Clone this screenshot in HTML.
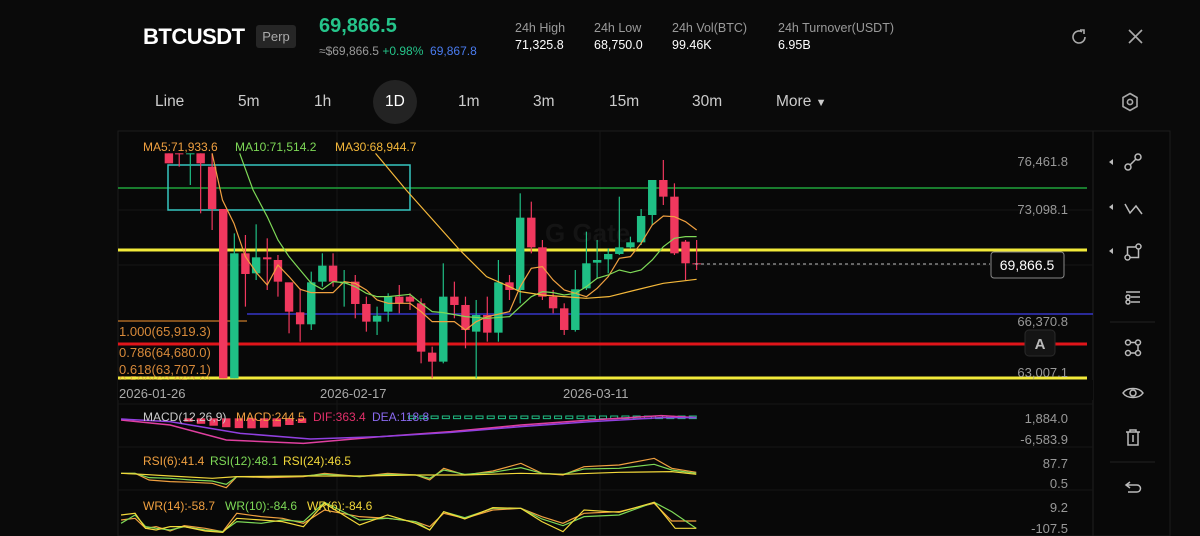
<!DOCTYPE html>
<html><head><meta charset="utf-8"><style>
*{margin:0;padding:0;box-sizing:border-box}
body{width:1200px;height:536px;background:#0a0a0a;overflow:hidden;font-family:"Liberation Sans",sans-serif;position:relative;color:#fff}
.a{position:absolute;white-space:nowrap}
.g{color:#9a9a9a}
</style></head><body>
<div class="a" style="left:143px;top:24px;font-size:22px;font-weight:bold;letter-spacing:-0.5px">BTCUSDT</div>
<div class="a" style="left:256px;top:25px;width:40px;height:23px;background:#262626;border-radius:3px;font-size:13px;color:#aaa;text-align:center;line-height:23px">Perp</div>
<div class="a" style="left:319px;top:15px;font-size:20px;font-weight:bold;color:#25c48a">69,866.5</div>
<div class="a" style="left:319px;top:44px;font-size:12px"><span class="g">≈$69,866.5</span> <span style="color:#25c48a">+0.98%</span> <span style="color:#4a7cf0">&nbsp;69,867.8</span></div>
<div class="a g" style="left:515px;top:21px;font-size:12.5px">24h High</div>
<div class="a" style="left:515px;top:38px;font-size:12.5px">71,325.8</div>
<div class="a g" style="left:594px;top:21px;font-size:12.5px">24h Low</div>
<div class="a" style="left:594px;top:38px;font-size:12.5px">68,750.0</div>
<div class="a g" style="left:672px;top:21px;font-size:12.5px">24h Vol(BTC)</div>
<div class="a" style="left:672px;top:38px;font-size:12.5px">99.46K</div>
<div class="a g" style="left:778px;top:21px;font-size:12.5px">24h Turnover(USDT)</div>
<div class="a" style="left:778px;top:38px;font-size:12.5px">6.95B</div>
<svg class="a" style="left:1070px;top:27px" width="20" height="20" viewBox="0 0 20 20" fill="none" stroke="#aaa" stroke-width="1.6"><path d="M15 10a6 6 0 1 1-3-5.2"/><path d="M10 3h4v4"/></svg>
<svg class="a" style="left:1127px;top:28px" width="17" height="17" viewBox="0 0 17 17" stroke="#aaa" stroke-width="1.6"><path d="M2 2l13 13M15 2L2 15"/></svg>

<div class="a" style="left:373px;top:80px;width:44px;height:44px;border-radius:22px;background:#232323"></div>
<div class="a" style="top:93px;font-size:15.5px;color:#ccc;left:0;width:100%;height:20px">
<span class="a" style="left:155px">Line</span><span class="a" style="left:238px">5m</span><span class="a" style="left:314px">1h</span><span class="a" style="left:385px;color:#fff">1D</span><span class="a" style="left:458px">1m</span><span class="a" style="left:533px">3m</span><span class="a" style="left:609px">15m</span><span class="a" style="left:692px">30m</span><span class="a" style="left:776px">More <span style="font-size:11px">▼</span></span></div>
<svg class="a" style="left:1121px;top:92px" width="18" height="20" viewBox="0 0 18 20" fill="none" stroke="#aaa" stroke-width="1.6"><path d="M9 1.5l7 4v9l-7 4-7-4v-9z"/><circle cx="9" cy="10" r="2.6"/></svg>

<svg class="a" style="left:0;top:0" width="1200" height="536" id="c">
<rect x="118" y="131" width="1052" height="405" fill="#080808" stroke="#1c1c1c"/>
<line x1="1093" y1="131" x2="1093" y2="536" stroke="#1f1f1f"/>
<g stroke="#161616"><line x1="118" y1="210" x2="1093" y2="210"/><line x1="118" y1="265" x2="1093" y2="265"/><line x1="118" y1="404" x2="1093" y2="404"/><line x1="118" y1="447" x2="1093" y2="447"/><line x1="118" y1="490" x2="1093" y2="490"/><line x1="337" y1="131" x2="337" y2="536"/><line x1="600" y1="131" x2="600" y2="536"/></g>
<text x="545" y="242" font-size="26" font-weight="bold" fill="#141414" font-family="Liberation Sans">G Gate</text>
<line x1="118" y1="188" x2="1087" y2="188" stroke="#1fa23a" stroke-width="1.5"/>
<line x1="118" y1="250" x2="1087" y2="250" stroke="#f2ea3a" stroke-width="3"/>
<line x1="247" y1="314" x2="1093" y2="314" stroke="#3636c8" stroke-width="1.5"/>
<line x1="118" y1="321" x2="247" y2="321" stroke="#c77a2a" stroke-width="1.2"/>
<line x1="118" y1="344" x2="1087" y2="344" stroke="#e0151a" stroke-width="3"/>
<line x1="118" y1="378" x2="1087" y2="378" stroke="#f2ea3a" stroke-width="3"/>
<rect x="168" y="165" width="242" height="45" fill="none" stroke="#35c6c0" stroke-width="1.5"/>
<g id="cd" transform="translate(100,130) scale(0.3827,0.3333)"></g>
<g fill="none" stroke-width="1.2" transform="translate(100,130) scale(0.3827,0.3333)">
<polyline vector-effect="non-scaling-stroke" stroke="#f0a040" points="293,70 320,210 350,280 380,380 410,430 437,465 465,405 494,440 523,478 552,488 609,488 638,455 667,460 696,480 724,510 753,520 810,520 839,545 868,575 897,575 926,575 955,600 983,575 1012,560 1070,545 1098,470 1127,415 1156,410 1184,450 1213,480 1242,490 1271,500 1299,475 1328,440 1357,385 1386,380 1414,340 1443,285 1472,258 1501,260 1530,275 1559,300"/>
<polyline vector-effect="non-scaling-stroke" stroke="#7ed957" points="365,70 400,180 437,260 465,330 494,380 523,420 552,460 581,478 609,455 638,458 667,470 696,490 724,500 753,500 810,493 839,520 868,545 897,548 955,560 1012,565 1070,560 1098,530 1127,500 1156,485 1184,488 1213,495 1242,490 1271,470 1299,445 1328,435 1357,420 1386,428 1414,420 1443,390 1472,350 1501,325 1530,320 1559,320"/>
<polyline vector-effect="non-scaling-stroke" stroke="#f5b83a" points="720,70 800,180 870,270 940,360 1010,440 1070,470 1098,485 1156,495 1213,500 1270,505 1330,500 1400,480 1472,460 1559,448"/>
</g>
<line x1="695" y1="264" x2="990" y2="264" stroke="#bbb" stroke-dasharray="3,3"/>
<g font-family="Liberation Sans" font-size="12">
<text x="143" y="151" fill="#f0a040">MA5:71,933.6</text><text x="235" y="151" fill="#7ed957">MA10:71,514.2</text><text x="335" y="151" fill="#f5b83a">MA30:68,944.7</text>
</g>
<g font-family="Liberation Sans" font-size="13" fill="#d88a3a">
<text x="119" y="336">1.000(65,919.3)</text><text x="119" y="357">0.786(64,680.0)</text><text x="119" y="374">0.618(63,707.1)</text><text x="119" y="385" opacity=".6">0.500(63,062.9)</text>
</g>
<rect x="118" y="380" width="975" height="20" fill="#080808"/>
<g font-family="Liberation Sans" font-size="13" fill="#aaa"><text x="119" y="398">2026-01-26</text><text x="320" y="398">2026-02-17</text><text x="563" y="398">2026-03-11</text></g>
<g font-family="Liberation Sans" font-size="13" fill="#999" text-anchor="end"><text x="1068" y="166">76,461.8</text><text x="1068" y="214">73,098.1</text><text x="1068" y="326">66,370.8</text><text x="1068" y="377">63,007.1</text>
<text x="1068" y="423">1,884.0</text><text x="1068" y="444">-6,583.9</text><text x="1068" y="468">87.7</text><text x="1068" y="488">0.5</text><text x="1068" y="512">9.2</text><text x="1068" y="533">-107.5</text></g>
<rect x="991" y="252" width="73" height="26" rx="3" fill="#0a0a0a" stroke="#888"/>
<text x="1027" y="270" font-family="Liberation Sans" font-size="14" fill="#fff" text-anchor="middle">69,866.5</text>
<rect x="1025" y="330" width="30" height="26" rx="4" fill="#141414" stroke="#2a2a2a"/>
<text x="1040" y="349" font-family="Liberation Sans" font-size="15" font-weight="bold" fill="#bbb" text-anchor="middle">A</text>
<g transform="translate(100,395) scale(0.7015,0.3333)" fill="none">
<g id="hist"></g>
<polyline vector-effect="non-scaling-stroke" stroke="#e040a0" stroke-width="1.5" points="30,75 100,90 180,135 290,145 400,125 500,110 600,90 700,75 800,62 850,68"/>
<polyline vector-effect="non-scaling-stroke" stroke="#9040e0" stroke-width="1.5" points="30,72 100,80 200,115 300,132 400,125 500,112 600,95 700,80 800,68 850,68"/>
<polyline vector-effect="non-scaling-stroke" stroke="#f0a040" stroke-width="1.2" points="30,235 50,235 70,255 100,260 130,262 160,265 180,278 195,245 240,248 290,245 320,235 370,245 410,235 450,240 470,255 490,220 520,240 560,228 600,205 630,235 660,240 690,215 740,210 790,190 815,220 850,232"/>
<polyline vector-effect="non-scaling-stroke" stroke="#7ed957" stroke-width="1.2" points="30,235 50,235 70,248 100,250 130,255 160,258 180,268 195,245 240,245 290,243 320,238 370,245 410,238 450,240 470,250 490,225 520,238 560,232 600,218 630,235 660,238 690,222 740,220 790,208 815,225 850,235"/>
<polyline vector-effect="non-scaling-stroke" stroke="#f2d83a" stroke-width="1.2" points="30,235 60,238 100,243 160,250 195,245 290,243 370,243 450,240 520,240 600,235 660,238 740,232 815,230 850,238"/>
<polyline vector-effect="non-scaling-stroke" stroke="#f0a040" stroke-width="1.2" points="30,375 50,370 65,400 80,395 100,408 120,392 150,400 175,410 195,355 230,365 260,370 290,385 320,345 370,365 410,370 450,380 470,395 490,355 520,370 560,345 600,340 630,365 660,385 690,355 740,350 790,325 815,378 850,378"/>
<polyline vector-effect="non-scaling-stroke" stroke="#7ed957" stroke-width="1.2" points="30,385 50,360 65,395 80,400 100,405 120,395 150,405 175,410 195,380 230,385 260,375 290,380 320,322 370,375 410,370 450,380 470,405 490,350 520,368 560,340 600,340 630,372 660,392 690,365 740,360 790,322 815,350 850,400"/>
<polyline vector-effect="non-scaling-stroke" stroke="#f2d83a" stroke-width="1.2" points="30,360 50,355 65,400 80,405 100,395 120,395 150,408 175,412 195,370 230,375 260,380 290,395 320,325 370,390 410,360 450,385 470,405 490,350 520,372 560,338 600,340 630,380 660,410 690,345 740,352 790,322 820,400 850,400"/>
</g>
<g font-family="Liberation Sans" font-size="12"><text x="143" y="421" fill="#ccc">MACD(12,26,9)</text><text x="236" y="421" fill="#f0a040">MACD:244.5</text><text x="313" y="421" fill="#e0306a">DIF:363.4</text><text x="372" y="421" fill="#8a6af0">DEA:118.8</text>
<text x="143" y="465" fill="#f0a040">RSI(6):41.4</text><text x="210" y="465" fill="#7ed957">RSI(12):48.1</text><text x="283" y="465" fill="#f2d83a">RSI(24):46.5</text>
<text x="143" y="510" fill="#f0a040">WR(14):-58.7</text><text x="225" y="510" fill="#7ed957">WR(10):-84.6</text><text x="307" y="510" fill="#f2d83a">WR(6):-84.6</text></g>
<g fill="none" stroke="#bbb" stroke-width="1.5">
<g transform="translate(1124,153)"><circle cx="4" cy="14" r="3"/><circle cx="14" cy="4" r="3"/><path d="M6 12l6-6"/></g>
<g transform="translate(1124,199)"><path d="M1 5l5 9 6-7 6 8"/></g>
<g transform="translate(1124,243)"><circle cx="3.5" cy="14.5" r="2.5"/><circle cx="14.5" cy="3.5" r="2.5"/><path d="M3.5 12V4h8M6 14.5h8.5V6"/></g>
<g transform="translate(1124,288)"><path d="M2 4h14M7 9h9M7 14h9"/><circle cx="4" cy="9" r="2"/><circle cx="4" cy="14" r="2"/></g>
<g transform="translate(1124,339)"><circle cx="4" cy="3.5" r="2.5"/><circle cx="14" cy="3.5" r="2.5"/><circle cx="4" cy="14" r="2.5"/><circle cx="14" cy="14" r="2.5"/><path d="M6.5 3.5h5M6.5 14h5M14 6v5"/></g>
<g transform="translate(1122,384)"><path d="M1 9c4-6 16-6 20 0-4 6-16 6-20 0z"/><circle cx="11" cy="9" r="3"/></g>
<g transform="translate(1125,429)"><path d="M1 3h14M5 3V1h6v2M3 3v13h10V3M8 6v7"/></g>
<g transform="translate(1125,480)"><path d="M5 2L1 5l4 3M1 5h11a3.5 3.5 0 0 1 0 7H3"/></g>
</g>
<g fill="#bbb"><path d="M1113 159l-4 3 4 3z"/><path d="M1113 204l-4 3 4 3z"/><path d="M1113 248l-4 3 4 3z"/></g>
<g stroke="#222"><line x1="1110" y1="322" x2="1155" y2="322"/><line x1="1110" y1="462" x2="1155" y2="462"/></g>
</svg>
<script>
var C=[[180,70,100,70,100,0],[207,70,72,70,110,0],[236,70,72,70,165,1],[263,70,100,70,250,0],[293,110,237,70,300,0],[322,237,745,237,745,0],[351,370,745,310,745,1],[380,370,432,315,530,0],[408,382,430,283,450,1],[437,382,388,325,480,0],[465,390,455,375,500,0],[494,457,545,470,610,0],[523,547,583,475,635,0],[552,457,583,425,600,1],[581,407,455,370,470,1],[609,407,455,370,470,0],[638,455,460,420,530,1],[667,455,522,435,565,0],[696,522,575,500,605,0],[724,557,575,530,615,1],[753,500,545,490,575,1],[782,500,520,465,550,0],[810,500,515,490,540,0],[839,520,665,505,700,0],[868,668,695,650,745,0],[897,500,695,400,700,1],[926,500,525,455,565,0],[955,525,600,500,655,0],[983,555,605,510,745,1],[1012,555,608,500,635,0],[1041,457,608,390,635,1],[1070,457,480,435,510,0],[1098,263,480,190,520,1],[1127,263,352,215,370,0],[1156,352,500,330,510,0],[1184,500,535,480,550,0],[1213,535,600,520,615,0],[1242,478,600,420,605,1],[1271,400,475,305,480,1],[1299,390,398,330,445,1],[1328,372,388,355,430,1],[1357,352,372,200,375,1],[1386,337,352,320,355,1],[1414,258,337,237,345,1],[1443,150,255,150,285,1],[1472,150,200,90,225,0],[1501,200,370,160,375,0],[1530,335,400,330,450,0],[1559,400,403,330,420,0]];
var s='';C.forEach(function(c){var col=c[5]?'#1fbf85':'#f0385e';s+='<line x1="'+c[0]+'" x2="'+c[0]+'" y1="'+c[3]+'" y2="'+c[4]+'" stroke="'+col+'" stroke-width="1.2" vector-effect="non-scaling-stroke"/><rect x="'+(c[0]-11)+'" y="'+c[1]+'" width="22" height="'+Math.max(3,c[2]-c[1])+'" fill="'+col+'"/>';});
document.getElementById('cd').innerHTML=s;
var h='';for(var x=120;x<=290;x+=18){var hh=10+Math.sin((x-120)/55)*20;h+='<rect x="'+x+'" y="70" width="12" height="'+hh+'" fill="#f0385e"/>';}
for(var x=440;x<=840;x+=16){h+='<rect x="'+x+'" y="63" width="10" height="8" fill="none" stroke="#1fbf85" vector-effect="non-scaling-stroke"/>';}
document.getElementById('hist').innerHTML=h;
</script>
</body></html>
